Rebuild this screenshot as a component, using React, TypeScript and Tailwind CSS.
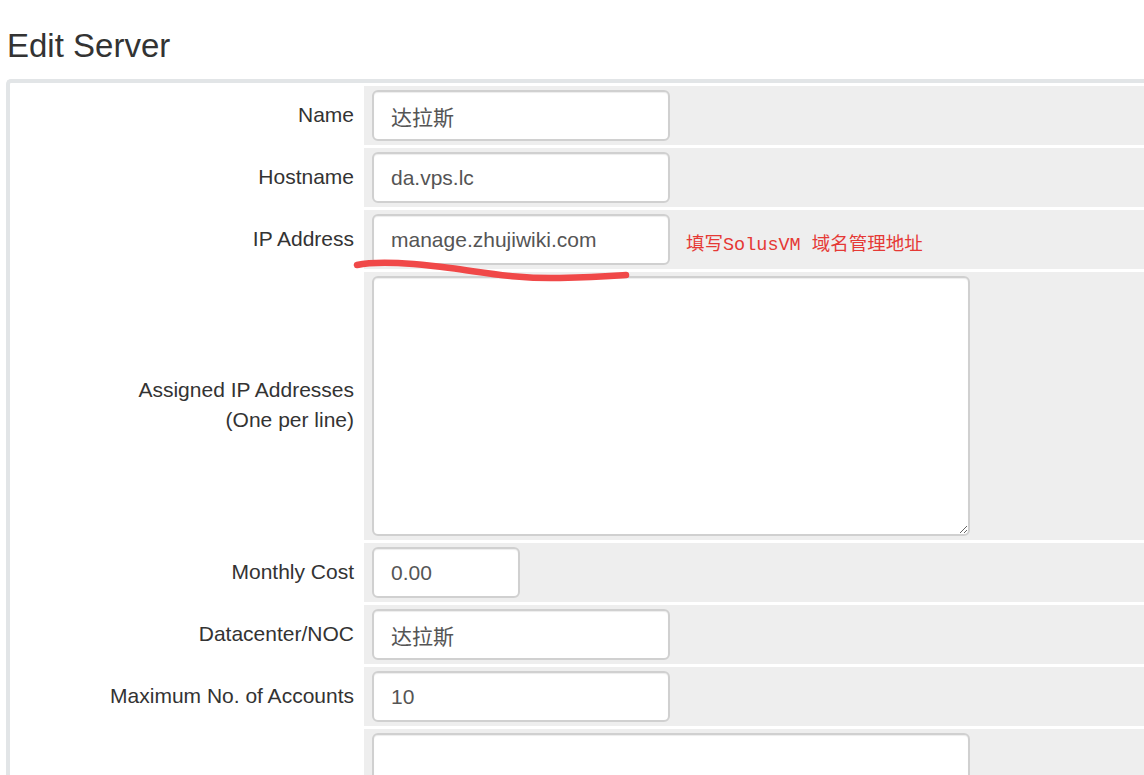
const sans = "font-['Liberation_Sans','Arial','Noto_Sans_CJK_SC',sans-serif]";

function Row({
  label,
  children,
}: {
  label: React.ReactNode;
  children: React.ReactNode;
}) {
  return (
    <div className="flex mb-[3px]">
      <div className="w-[354px] shrink-0 flex items-center justify-end pr-[10px] pb-[2px] text-right text-[21px] leading-[30px] text-[#333333]">
        {label}
      </div>
      <div className="flex-1 flex items-center bg-[#eeeeee] py-[4px] pl-[8px]">
        {children}
      </div>
    </div>
  );
}

function TextInput({ value, width }: { value: string; width: string }) {
  return (
    <input
      type="text"
      defaultValue={value}
      className={`${width} h-[51px] rounded-[6px] border-2 border-[#d0d0d0] bg-white px-[17px] text-[21px] text-[#555555] shadow-[inset_0_1px_1px_rgba(0,0,0,0.075)] outline-none ${sans}`}
    />
  );
}

export default function App() {
  return (
    <div className={`relative w-[1144px] h-[775px] overflow-hidden bg-white ${sans}`}>
      <h1 className="pt-[28px] pl-[7px] text-[33px] leading-[1.1] text-[#333333]">
        Edit Server
      </h1>

      <div className="mt-[15px] ml-[6px] w-[1200px] border-l-4 border-t-4 border-[#e2e5e7] rounded-tl-[5px] bg-white pt-[3px]">
        <Row label="Name">
          <TextInput value="达拉斯" width="w-[298px]" />
        </Row>
        <Row label="Hostname">
          <TextInput value="da.vps.lc" width="w-[298px]" />
        </Row>
        <Row label="IP Address">
          <TextInput value="manage.zhujiwiki.com" width="w-[298px]" />
          <span className="ml-[16px] mt-[12px] text-[18.5px] text-[#e53935] font-['Liberation_Mono','Noto_Sans_CJK_SC',monospace]">
            填写SolusVM 域名管理地址
          </span>
        </Row>
        <Row
          label={
            <span>
              Assigned IP Addresses
              <br />
              (One per line)
            </span>
          }
        >
          <textarea className="w-[598px] h-[260px] rounded-[6px] border-2 border-[#d0d0d0] bg-white shadow-[inset_0_1px_1px_rgba(0,0,0,0.075)] outline-none" />
        </Row>
        <Row label="Monthly Cost">
          <TextInput value="0.00" width="w-[148px]" />
        </Row>
        <Row label="Datacenter/NOC">
          <TextInput value="达拉斯" width="w-[298px]" />
        </Row>
        <Row label="Maximum No. of Accounts">
          <TextInput value="10" width="w-[298px]" />
        </Row>
        <Row label="">
          <textarea className="w-[598px] h-[260px] rounded-[6px] border-2 border-[#d0d0d0] bg-white shadow-[inset_0_1px_1px_rgba(0,0,0,0.075)] outline-none" />
        </Row>
      </div>

      {/* hand-drawn red underline */}
      <svg
        className="absolute left-0 top-0 pointer-events-none"
        width="1144"
        height="775"
        viewBox="0 0 1144 775"
      >
        <path
          d="M357 265 C 375 261, 405 262, 450 268 S 520 279, 560 278 S 610 276, 626 275"
          fill="none"
          stroke="#f04848"
          strokeWidth="6.5"
          strokeLinecap="round"
        />
      </svg>
    </div>
  );
}
